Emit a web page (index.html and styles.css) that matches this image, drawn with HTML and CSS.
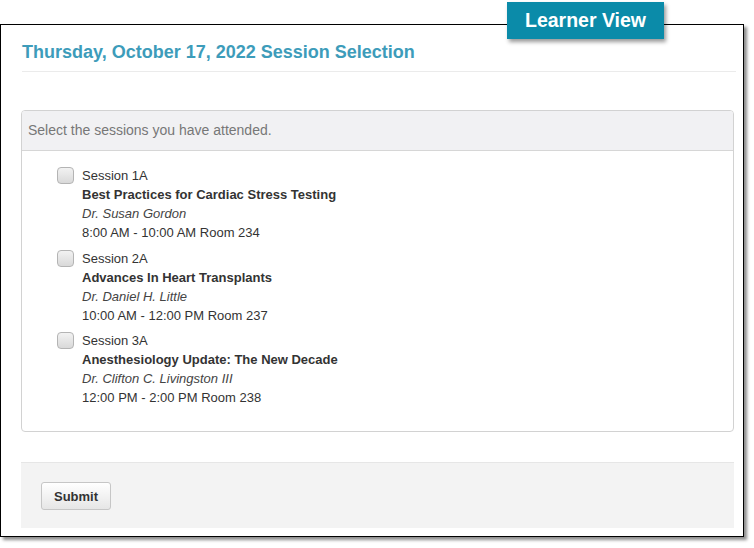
FILE: index.html
```html
<!DOCTYPE html>
<html lang="en">
<head>
<meta charset="utf-8">
<title>Session Selection</title>
<link rel="stylesheet" href="styles.css">
</head>
<body>
<div class="frame">
  <div class="badge">Learner View</div>
  <div class="page">
    <h1 class="title">Thursday, October 17, 2022 Session Selection</h1>
    <div class="panel">
      <div class="panel-head">Select the sessions you have attended.</div>
      <div class="panel-body">
        <label class="item">
          <input type="checkbox" class="check">
          <span class="info">
            <span class="line">Session 1A</span>
            <span class="line bold">Best Practices for Cardiac Stress Testing</span>
            <span class="line ital">Dr. Susan Gordon</span>
            <span class="line">8:00 AM - 10:00 AM Room 234</span>
          </span>
        </label>
        <label class="item">
          <input type="checkbox" class="check">
          <span class="info">
            <span class="line">Session 2A</span>
            <span class="line bold">Advances In Heart Transplants</span>
            <span class="line ital">Dr. Daniel H. Little</span>
            <span class="line">10:00 AM - 12:00 PM Room 237</span>
          </span>
        </label>
        <label class="item">
          <input type="checkbox" class="check">
          <span class="info">
            <span class="line">Session 3A</span>
            <span class="line bold">Anesthesiology Update: The New Decade</span>
            <span class="line ital">Dr. Clifton C. Livingston III</span>
            <span class="line">12:00 PM - 2:00 PM Room 238</span>
          </span>
        </label>
      </div>
    </div>
    <div class="footer">
      <button class="submit" type="button">Submit</button>
    </div>
  </div>
</div>
</body>
</html>
```
FILE: styles.css
```css
html, body {
  margin: 0;
  padding: 0;
  background: #ffffff;
}
body {
  width: 754px;
  height: 548px;
  overflow: hidden;
  font-family: "Liberation Sans", Arial, sans-serif;
  color: #333333;
}
.frame {
  position: relative;
  margin-top: 24px;
  width: 742px;
  height: 511px;
  border: 1px solid #000000;
  background: #ffffff;
  box-shadow: 3px 3px 3px rgba(0, 0, 0, 0.45);
}
.badge {
  position: absolute;
  left: 506px;
  top: -23px;
  width: 157px;
  height: 37px;
  line-height: 37px;
  background: #0b8ba9;
  color: #ffffff;
  font-weight: bold;
  font-size: 19.5px;
  text-align: center;
  box-shadow: 2px 3px 4px rgba(0, 0, 0, 0.4);
}
.page {
  padding: 0 9px 0 20px;
}
.title {
  margin: 0 -2px 0 1px;
  padding: 16px 0 8px 0;
  font-size: 18px;
  line-height: 22px;
  font-weight: bold;
  color: #3d9cba;
  border-bottom: 1px solid #ebebeb;
}
.panel {
  margin-top: 38px;
  border: 1px solid #d2d2d2;
  border-radius: 4px;
  overflow: hidden;
}
.panel-head {
  padding: 9px 6px 10px 6px;
  font-size: 14px;
  line-height: 20px;
  color: #777777;
  background: #f1f1f3;
  border-bottom: 1px solid #d6d6d6;
}
.panel-body {
  padding: 15px 0 24px 35px;
  display: flex;
  flex-direction: column;
  gap: 6.5px;
}
.item {
  display: flex;
  align-items: flex-start;
  font-size: 13px;
  line-height: 19px;
}
.check {
  -webkit-appearance: none;
  appearance: none;
  margin: 1px 8px 0 0;
  width: 17px;
  height: 17px;
  border: 1px solid #b4b4b4;
  border-radius: 4px;
  background: linear-gradient(#f2f2f2, #d9d9d9);
  box-sizing: border-box;
  flex: none;
}
.info {
  display: flex;
  flex-direction: column;
}
.line {
  display: block;
}
.bold {
  font-weight: bold;
}
.ital {
  font-style: italic;
  color: #444444;
}
.footer {
  margin-top: 30px;
  padding: 19px 20px 18px 20px;
  background: #f3f3f3;
  border-top: 1px solid #e6e6e6;
}
.submit {
  display: block;
  width: 70px;
  height: 28px;
  margin: 0;
  padding: 0;
  border: 1px solid #c6c6c6;
  border-radius: 3px;
  background: linear-gradient(#ffffff, #e6e6e6);
  font-family: "Liberation Sans", Arial, sans-serif;
  font-size: 13px;
  font-weight: bold;
  color: #333333;
}
```
